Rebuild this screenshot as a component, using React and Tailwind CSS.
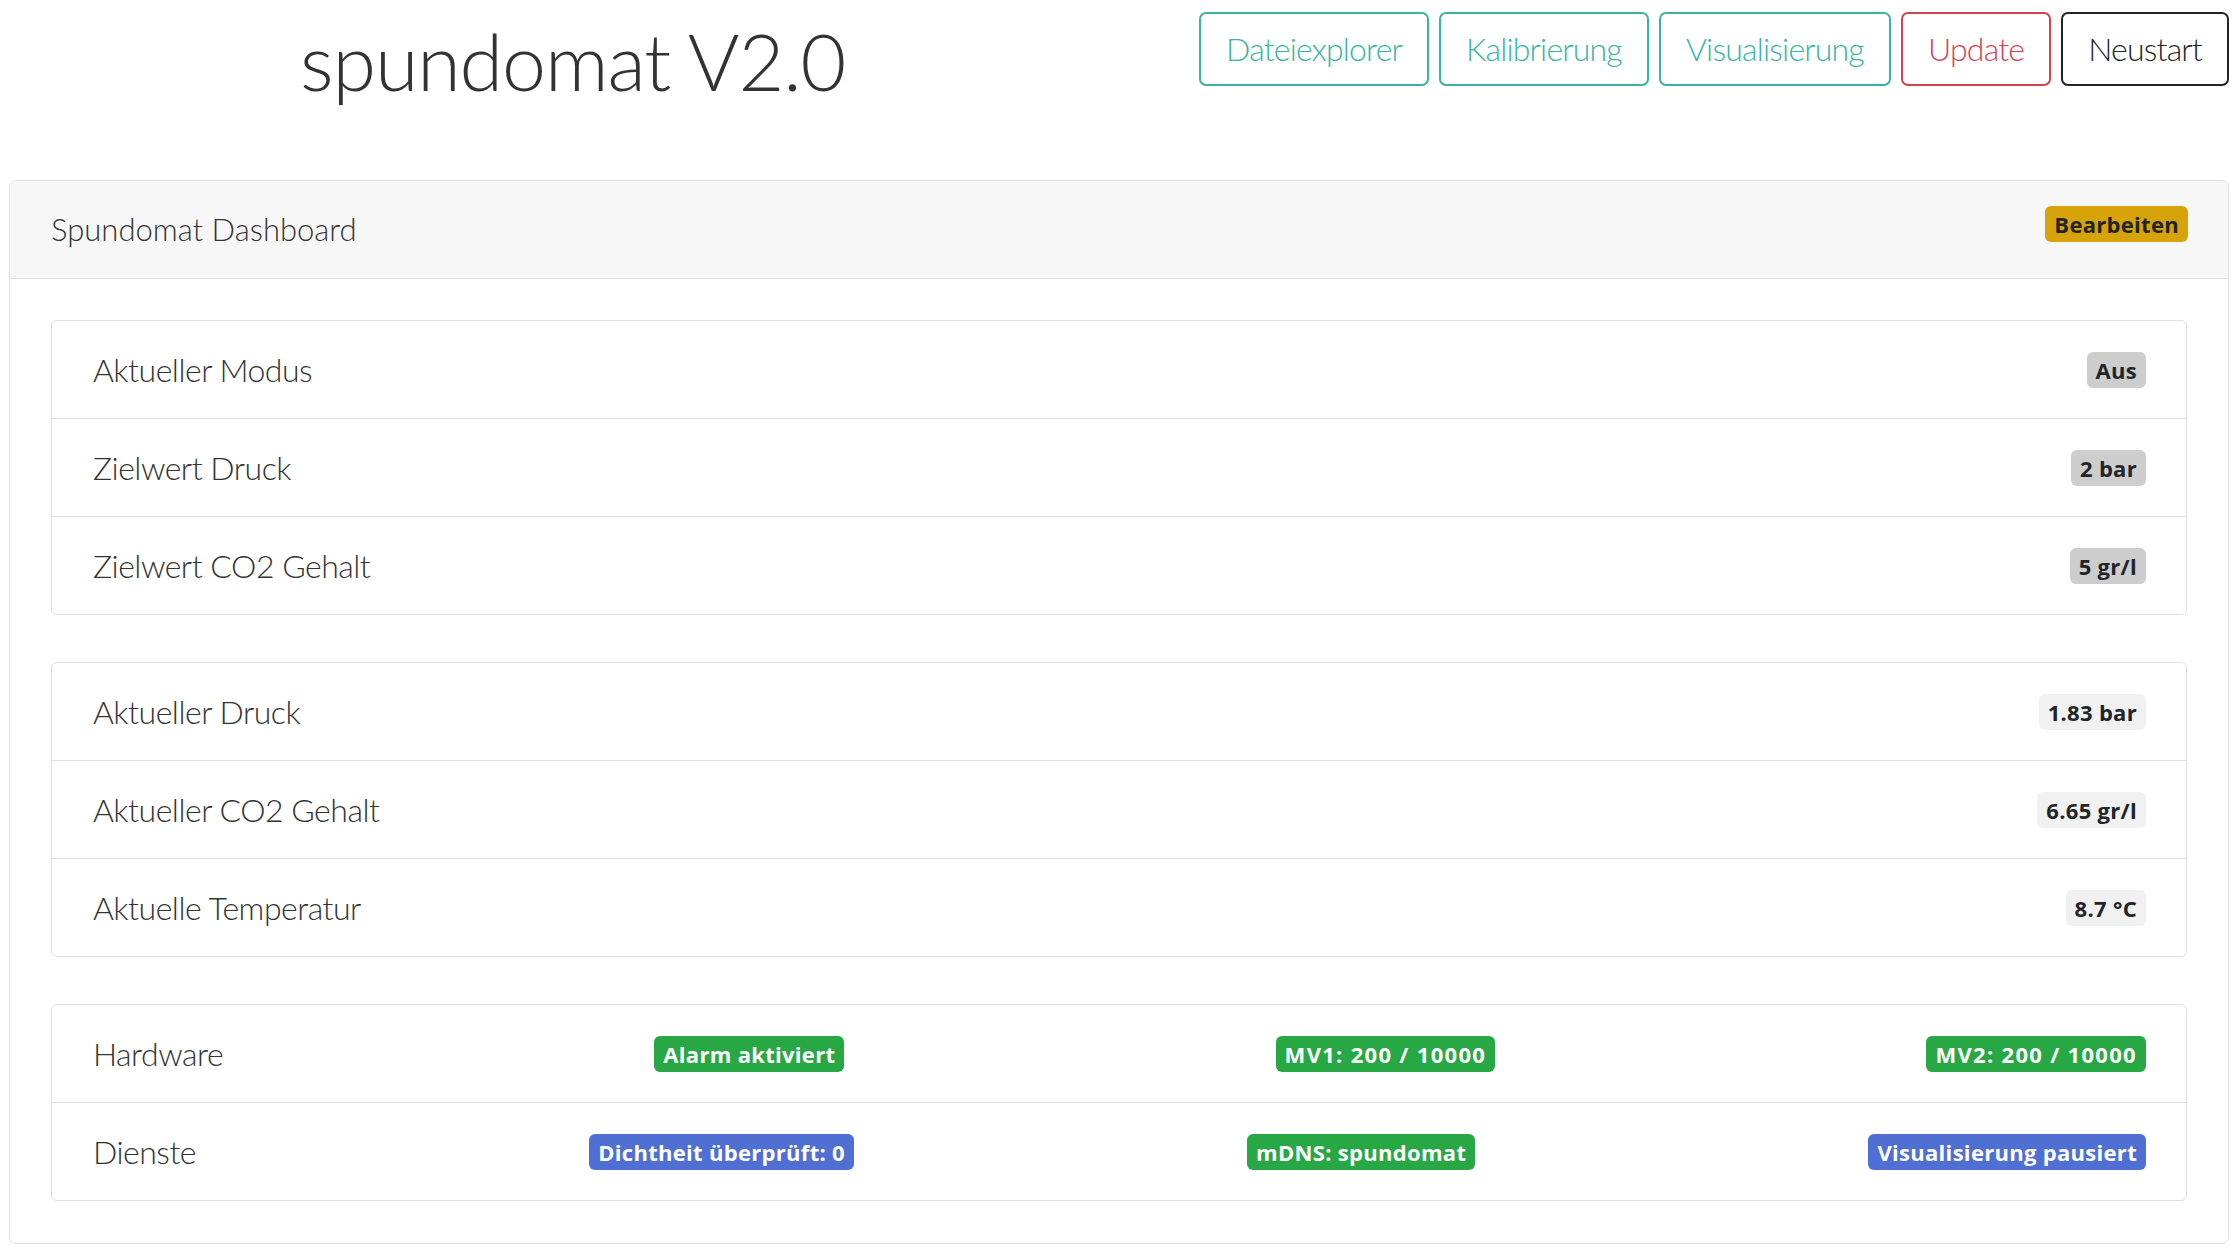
import React from "react";

const FONT = "font-['Lato','Open_Sans',sans-serif]";

function Badge({ children, color, wide }) {
  const colors = {
    warning: "bg-[#d6a30b] text-[#212529]",
    gray: "bg-[#cdcdcd] text-[#212529]",
    light: "bg-[#f1f1f1] text-[#212529]",
    green: "bg-[#28a745] text-white",
    blue: "bg-[#4f6fd2] text-white",
  };
  return (
    <span
      className={`inline-flex h-[36px] items-center rounded-[6px] px-[9px] font-['Open_Sans','Noto_Sans',sans-serif] text-[22px] font-bold leading-none whitespace-nowrap ${
        wide ? "tracking-[1.3px]" : "tracking-[0.3px]"
      } ${colors[color]}`}
    >
      {children}
    </span>
  );
}

function Row({ label, children }) {
  return (
    <div className="box-content flex h-[97px] items-center justify-between pl-[41px] pr-[40px]">
      <span className="text-[32px] font-light tracking-[-0.5px] text-[#333]">{label}</span>
      {children}
    </div>
  );
}

function List({ children }) {
  return (
    <div className="flex flex-col divide-y divide-[#dfdfdf] rounded-[6px] border border-[#dfdfdf]">
      {children}
    </div>
  );
}

const btnBase =
  "flex h-[74px] items-center rounded-[7px] border-2 bg-white px-[25px] text-[32px] font-light leading-none tracking-[-0.8px]";

export default function App() {
  return (
    <div className={`min-h-screen bg-white text-[#333] ${FONT}`}>
      <header className="flex h-[180px] items-start justify-between">
        <h1 className="ml-[300px] mt-[21px] text-[79px] font-light leading-[80px] tracking-[-1.1px] text-[#333]">
          spundomat V2.0
        </h1>
        <div className="mr-[9px] mt-[12px] flex gap-[10px]">
          <button className={`${btnBase} border-[#3ab3a3] text-[#3ab3a3]`}>Dateiexplorer</button>
          <button className={`${btnBase} border-[#3ab3a3] text-[#3ab3a3]`}>Kalibrierung</button>
          <button className={`${btnBase} border-[#3ab3a3] text-[#3ab3a3]`}>Visualisierung</button>
          <button className={`${btnBase} border-[#d3434f] text-[#d3434f]`}>Update</button>
          <button className={`${btnBase} border-[#212529] text-[#212529]`}>Neustart</button>
        </div>
      </header>

      <div className="mx-[9px] rounded-[7px] border border-[#dfdfdf]">
        <div className="flex h-[98px] items-center justify-between rounded-t-[7px] border-b border-[#dfdfdf] bg-[#f7f7f7] pl-[41px] pr-[40px]">
          <span className="text-[31px] font-light text-[#333]">Spundomat Dashboard</span>
          <span className="mb-[12px]">
            <Badge color="warning">Bearbeiten</Badge>
          </span>
        </div>

        <div className="flex flex-col gap-[47px] px-[41px] pt-[41px] pb-[42px]">
          <List>
            <Row label="Aktueller Modus">
              <Badge color="gray">Aus</Badge>
            </Row>
            <Row label="Zielwert Druck">
              <Badge color="gray">2 bar</Badge>
            </Row>
            <Row label="Zielwert CO2 Gehalt">
              <Badge color="gray">5 gr/l</Badge>
            </Row>
          </List>

          <List>
            <Row label="Aktueller Druck">
              <Badge color="light">1.83 bar</Badge>
            </Row>
            <Row label="Aktueller CO2 Gehalt">
              <Badge color="light">6.65 gr/l</Badge>
            </Row>
            <Row label="Aktuelle Temperatur">
              <Badge color="light">8.7 °C</Badge>
            </Row>
          </List>

          <List>
            <Row label="Hardware">
              <Badge color="green">Alarm aktiviert</Badge>
              <Badge color="green" wide>MV1: 200 / 10000</Badge>
              <Badge color="green" wide>MV2: 200 / 10000</Badge>
            </Row>
            <Row label="Dienste">
              <Badge color="blue">Dichtheit überprüft: 0</Badge>
              <Badge color="green">mDNS: spundomat</Badge>
              <Badge color="blue">Visualisierung pausiert</Badge>
            </Row>
          </List>
        </div>
      </div>
    </div>
  );
}
